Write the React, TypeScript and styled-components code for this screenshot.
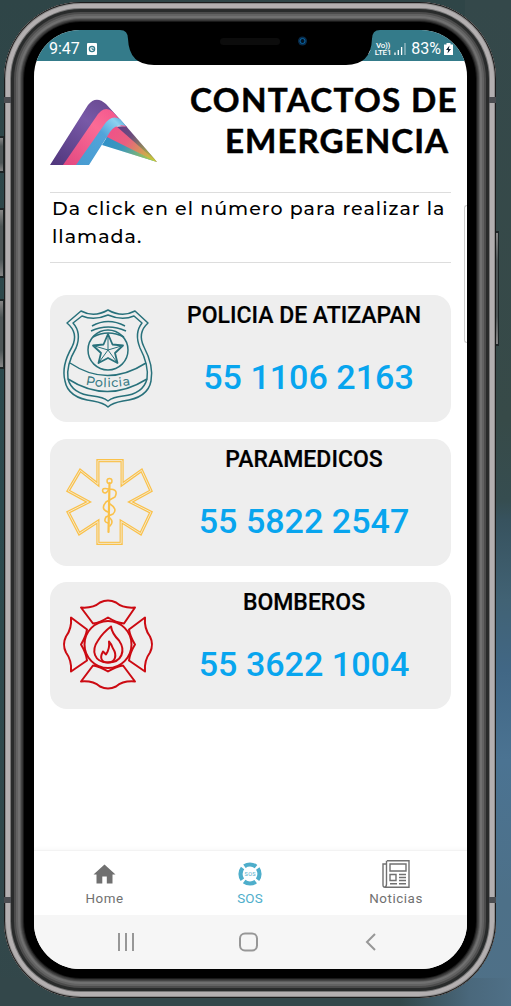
import React from 'react';
import styled, { createGlobalStyle } from 'styled-components';

const Global = createGlobalStyle`
  * { box-sizing: border-box; }
  body { margin: 0; background: #304749; font-family: Roboto, sans-serif; }
`;

const Stage = styled.div`
  position: relative;
  width: 511px;
  height: 1006px;
  padding: 2px 0 0 4px;
  overflow: hidden;
  background:
    linear-gradient(90deg, #33474a 0, #33474a 400px, #4a687c 470px, #4f7087 511px) 0 100% / 511px 28px no-repeat,
    linear-gradient(180deg, #34484a 0, #374a48 420px, #364d50 500px, #37525e 520px, #416274 600px, #416785 670px, #4b7392 760px, #4d7088 900px, #4f7087 1006px) 100% 0 / 46px 100% no-repeat,
    linear-gradient(180deg, #2f4547, #2b4a4e 50%, #33474a);
`;

const SideKey = styled.i<{ $top: number; $height: number; $right?: boolean }>`
  position: absolute;
  top: ${(p) => p.$top}px;
  ${(p) => (p.$right ? 'left: 495px' : 'left: -1px')};
  width: ${(p) => (p.$right ? 4 : 5)}px;
  height: ${(p) => p.$height}px;
  border: solid #1d2526;
  border-width: 2px 1px;
  background: linear-gradient(#858585, #4d5556 25%, #4d5556 75%, #858585);
`;

const Shell = styled.div`
  position: relative;
  width: 492px;
  height: 996px;
  padding: 28px 29px 29px 30px;
  border-radius: 77px;
  background: #000;
  box-shadow:
    inset 0 0 0 1px #1c1c1c,
    inset 0 0 0 2px #8d8b8b,
    inset 0 0 0 6px #b3afb0,
    inset 0 0 0 7px #777,
    inset 0 0 0 10px #292b2b,
    inset 0 0 0 12px #4c4c4c,
    inset 0 0 0 14px #626262,
    inset 0 0 0 16px #707070,
    inset 0 0 0 17px #5d5d5d,
    inset 0 0 0 18px #444,
    inset 0 0 0 19px #353535,
    inset 0 0 0 20px #191919;
`;

const Band = styled.i<{ $top: number; $right?: boolean }>`
  position: absolute;
  top: ${(p) => p.$top}px;
  ${(p) => (p.$right ? 'right: 0' : 'left: 0')};
  width: 7px;
  height: 6px;
  background: #4a4c50;
`;

const Screen = styled.div`
  position: relative;
  display: flex;
  flex-direction: column;
  width: 433px;
  height: 939px;
  border-radius: 46px;
  overflow: hidden;
  background: #fff;
`;

const StatusBar = styled.header`
  flex: none;
  display: flex;
  justify-content: space-between;
  height: 31px;
  padding: 8px 14px 0 15px;
  background: #347b8a;
  color: #fff;
  font-size: 16px;
  line-height: 22px;
`;

const StatusGroup = styled.div`
  display: flex;
  align-items: center;
  height: 22px;
  white-space: nowrap;
`;

const AlarmIcon = styled.svg`
  margin-left: 7px;
`;

const SignalIcon = styled.svg`
  margin: 0 5px 0 3px;
`;

const BatteryIcon = styled.svg`
  margin-left: 3px;
`;

const TickIcon = styled.svg`
  margin: 5px 4px 0 0;
`;

const Volte = styled.span`
  display: flex;
  flex-direction: column;
  align-items: center;
  font-size: 8px;
  font-weight: 500;
  line-height: 7.5px;
  letter-spacing: -0.2px;
`;

const Notch = styled.svg`
  position: absolute;
  left: 84px;
  top: 0;
`;

const Content = styled.main`
  flex: 1;
  padding: 0 16px;
`;

const Hero = styled.div`
  display: flex;
  height: 132px;
  border-bottom: 1px solid #ddd;
`;

const Logo = styled.svg`
  flex: none;
  margin-top: 38px;
`;

const Title = styled.h1`
  flex: none;
  width: 288px;
  margin: 18px 0 0 22px;
  text-align: center;
  font: 700 33.2px/41px Lato, sans-serif;
  letter-spacing: 1.3px;
  -webkit-text-stroke: 0.5px #000;
  color: #000;
  white-space: nowrap;

  span { display: block; }
  span:last-child { padding-left: 26px; letter-spacing: 1px; }
`;

const Hint = styled.p`
  height: 70px;
  margin: 0 0 32px;
  padding: 2px 2px 0;
  border-bottom: 1px solid #ddd;
  font: 500 19px/28px Montserrat, Inter, sans-serif;
  letter-spacing: 1.03px;
  color: #000;
  white-space: nowrap;
`;

const Card = styled.article`
  display: flex;
  width: 401px;
  height: 127px;
  margin-bottom: 16.5px;
  border-radius: 17px;
  background: #eee;
`;

const Emblem = styled.svg`
  flex: none;
  width: 116px;
  height: 127px;
`;

const CardBody = styled.div`
  flex: 1;
  margin-left: -9px;
  text-align: center;
`;

const Name = styled.h2`
  margin: 9px 0 0;
  font: 500 23px/24px Roboto, sans-serif;
  -webkit-text-stroke: 0.2px #000;
  color: #000;
  white-space: nowrap;
`;

const Phone = styled.a<{ $dx: number }>`
  display: block;
  margin-top: 28px;
  padding-left: ${(p) => p.$dx}px;
  font: 500 34.1px/42px Roboto, sans-serif;
  color: #08a5ee;
  white-space: nowrap;
`;

const Tabs = styled.nav`
  flex: none;
  display: flex;
  height: 65px;
  border-top: 1px solid #f3f3f3;
  box-shadow: 0 -2px 3px #fafafa;
`;

const Tab = styled.div<{ $active?: boolean; $width: number }>`
  display: flex;
  flex-direction: column;
  align-items: center;
  width: ${(p) => p.$width}px;
  padding-top: 8px;
  color: ${(p) => (p.$active ? '#4eaecb' : '#707070')};
  font-size: 13.4px;
  line-height: 18px;
  letter-spacing: ${(p) => (p.$active ? 0.2 : 0.55)}px;

  svg { height: 30px; flex: none; margin-bottom: 1px; }
`;

const SystemBar = styled.footer`
  flex: none;
  display: flex;
  align-items: center;
  height: 54px;
  padding-left: 82px;
  gap: 101px;
  background: #f6f6f6;
`;

const EdgeHandle = styled.i`
  position: absolute;
  right: 0;
  top: 175px;
  width: 3px;
  height: 138px;
  border: 1px solid #ccc;
  border-right: 0;
  border-radius: 3px 0 0 3px;
  background: #fff;
`;

const AtizapanLogo = () => (
  <Logo width="108" height="67" viewBox="0 0 108 67">
    <defs>
      <linearGradient id="purple" x1="0" y1="1" x2=".8" y2="0">
        <stop stopColor="#50367c" /><stop offset=".65" stopColor="#7859a7" /><stop offset="1" stopColor="#68488f" />
      </linearGradient>
      <linearGradient id="pink" x1="0" y1="1" x2="1" y2="0">
        <stop stopColor="#e24880" /><stop offset=".6" stopColor="#fa6b95" /><stop offset="1" stopColor="#f2528b" />
      </linearGradient>
      <linearGradient id="blue" x1="0" y1="1" x2="1" y2="0">
        <stop stopColor="#489bd0" /><stop offset=".6" stopColor="#51a4da" /><stop offset=".85" stopColor="#8bd1f0" /><stop offset="1" stopColor="#409bd0" />
      </linearGradient>
      <linearGradient id="tip" gradientUnits="userSpaceOnUse" x1="62" y1="30" x2="107" y2="63">
        <stop stopColor="#b8d132" stopOpacity="0" /><stop offset=".35" stopColor="#b8d132" stopOpacity=".1" /><stop offset="1" stopColor="#c4d32e" />
      </linearGradient>
    </defs>
    <path d="M62 28 L76 27 L107 63Z" fill="#633c86" />
    <path d="M60 30 L65 26 L107 63 L56 39Z" fill="#ef5388" />
    <path d="M57 38 L107 63 L52 46Z" fill="#2f91c9" />
    <path d="M61 28 L76 27 L107 63 L52 46Z" fill="url(#tip)" />
    <path d="M0 66 L38 6 Q46-4 56 5 L77 28 L55 20 L14 66Z" fill="url(#purple)" />
    <path d="M13 66 L46 18 Q54 5 63 13 L76 28 L58 24 L27 66Z" fill="url(#pink)" />
    <path d="M26 66 L54 26 Q61 15 70 20 L76 27 Q66 24 60 33 L39 66Z" fill="url(#blue)" />
  </Logo>
);

const PoliceBadge = () => (
  <Emblem viewBox="0 0 116 127" fill="none" stroke="#28717b" strokeWidth="1.5" strokeLinejoin="round">
    <path d="M31 16 Q44 23 58 15 Q72 23 85 16 L98 28 Q87 38 94 52 Q104 71 101 86 Q98 103 73 106 Q62 108 58 112 Q54 108 43 106 Q18 103 15 86 Q11 71 22 52 Q29 38 17 28Z" />
    <path d="M32 21 Q44 26 58 20 Q72 26 84 21 L92 28 Q84 38 90 53 Q99 70 97 84 Q93 99 73 101 Q63 102 58 106 Q53 102 43 101 Q22 99 18 84 Q16 70 26 53 Q32 38 23 28Z" />
    <path d="M20 68 Q57 93 96 68 M18 84 Q57 109 97 84 M42 31 Q58 22 75 31 M41 36 Q58 28 76 36 M43 42 Q58 34 74 42" />
    <circle cx="58" cy="55" r="20" />
    <path strokeWidth="1.8" d="M58 39 L62.5 49.5 L73 50.5 L65 58 L67.5 68 L58 63 L48.5 68 L51 58 L43 50.5 L53.5 49.5Z" />
    <path strokeWidth="1" d="M58 55V39 M58 55 L73 50.5 M58 55 L67.5 68 M58 55 L48.5 68 M58 55 L43 50.5" />
    <path id="ribbon" d="M35.500 89.500 Q58 95 88 88.500" stroke="none" />
    <text fill="#28717b" stroke="#28717b" strokeWidth=".2" fontFamily="Montserrat, Lato, sans-serif" fontSize="12.3" letterSpacing=".8">
      <textPath href="#ribbon">Policia</textPath>
    </text>
  </Emblem>
);

const MedicStar = () => {
  const star = 'M47 18.500H73V44L94 29L104 51L82 63L104 74L93 97L72 84V107.500H47V84L27 97L15 74L37 63L15 51L28 29L47 44Z';
  return (
    <Emblem viewBox="0 0 116 127" fill="none">
      <g transform="translate(4.200 4.400) scale(.93)">
        <path d={star} stroke="#fac14a" strokeWidth="3.4" />
        <path d={star} stroke="#f3ead2" strokeWidth="1" />
      </g>
      <g stroke="#fac14a" strokeLinecap="round">
        <circle cx="59.500" cy="42" r="2.500" strokeWidth="1.400" />
        <path d="M59.500 44 L58.500 93" strokeWidth="2.200" />
        <path d="M59 50 Q51 48 53 53 Q56 56 59 50 Q69 50 65 58 L56 63 Q50 70 58 73 M60 65 Q68 70 63 75 L56 78 Q53 83 58 84 M60 79 Q64 83 60 87" strokeWidth="1.600" />
      </g>
    </Emblem>
  );
};

const FireCross = () => (
  <Emblem viewBox="0 -2.500 116 127" fill="none" stroke="#cc0a12" strokeWidth="2" strokeLinejoin="round">
    <path d="M31 23 Q43 24 50 18 Q58 14 66 18 Q73 24 85 23 L74 39 Q66 38 58 33 Q50 38 43 39Z" />
    <path d="M31 97 Q43 96 50 102 Q58 106 66 102 Q73 96 85 97 L73 81 Q66 82 58 87 Q50 82 43 81Z" />
    <path d="M21 33 Q22 44 16 52 Q12 60 16 68 Q22 76 21 87 L37 76 Q36 68 31 60 Q36 52 37 45Z" />
    <path d="M95 33 Q94 44 100 52 Q104 60 100 68 Q94 76 95 87 L79 76 Q80 68 85 60 Q80 52 79 45Z" />
    <circle cx="58" cy="60" r="23.500" />
    <path d="M61 42 Q53 48 48 56 C41 66 44 78 58 78 C72 78 76 66 69 56 Q62 49 61 42Z" />
    <path d="M59 57 Q60 64 56 70 L53 67 C49 74 52 78 58 78 C66 78 67 70 63 64 Q61 59 59 57Z" />
  </Emblem>
);

const contacts = [
  { name: 'POLICIA DE ATIZAPAN', phone: '55 1106 2163', Icon: PoliceBadge, dx: 9 },
  { name: 'PARAMEDICOS', phone: '55 5822 2547', Icon: MedicStar, dx: 0 },
  { name: 'BOMBEROS', phone: '55 3622 1004', Icon: FireCross, dx: 0 },
];

export default function App() {
  return (
    <Stage>
      <Global />
      <SideKey $top={136} $height={37} />
      <SideKey $top={208} $height={70} />
      <SideKey $top={299} $height={70} />
      <SideKey $top={231} $height={115} $right />
      <Shell>
        <Band $top={95} />
        <Band $top={95} $right />
        <Band $top={895} />
        <Band $top={895} $right />
        <Screen>
          <StatusBar>
            <StatusGroup>
              9:47
              <AlarmIcon width="10" height="12" viewBox="0 0 10 12">
                <rect width="10" height="12" rx="1" fill="#fff" />
                <circle cx="5" cy="6" r="2.600" fill="none" stroke="#347b8a" strokeWidth="1.400" />
                <path d="M5 4.500V6.300H7" fill="none" stroke="#347b8a" />
              </AlarmIcon>
            </StatusGroup>
            <StatusGroup>
              <TickIcon width="4" height="6" viewBox="0 0 4 6"><path d="M3 1L1 5" stroke="#fff" /></TickIcon>
              <Volte><span>Vo))</span><span>LTE1</span></Volte>
              <SignalIcon width="12" height="12" viewBox="0 0 12 12" stroke="#fff" strokeWidth="1.300">
                <path d="M1 9.500V12M4.300 7V12M7.600 4V12" /><path d="M11 0V12" opacity=".5" />
              </SignalIcon>
              83%
              <BatteryIcon width="9" height="12" viewBox="0 0 9 12">
                <path d="M0 1.500H2.500V0H6.500V1.500H9V12H0Z" fill="#fff" />
                <path d="M5.500 2.500L2 7H4.200L3.500 10.500L7 6H4.800Z" fill="#123" />
              </BatteryIcon>
            </StatusGroup>
          </StatusBar>
          <Notch width="264" height="35" viewBox="0 0 264 35">
            <path d="M2 0 Q10 0 10 9 Q11 35 36 35H228Q253 35 254 9Q254 0 262 0Z" fill="#000" />
            <rect x="102" y="8" width="60" height="7" rx="3.500" fill="#0c0c0c" />
            <circle cx="184.500" cy="11" r="4.500" fill="#082b4a" />
            <circle cx="184.500" cy="11" r="2.500" fill="#031323" stroke="#0968a8" />
          </Notch>
          <Content>
            <Hero>
              <AtizapanLogo />
              <Title><span>CONTACTOS DE</span><span>EMERGENCIA</span></Title>
            </Hero>
            <Hint>
              Da click en el número para realizar la<br />llamada.
            </Hint>
            {contacts.map(({ name, phone, Icon, dx }) => (
              <Card key={name}>
                <Icon />
                <CardBody>
                  <Name>{name}</Name>
                  <Phone $dx={dx}>{phone}</Phone>
                </CardBody>
              </Card>
            ))}
          </Content>
          <Tabs>
            <Tab $width={141}>
              <svg width="24" viewBox="0 0 24 30"><path d="M11.500 5.500L.5 15.500H3.500V24.500H9.300V17.500H13.800V24.500H19.500V15.500H22.500Z" fill="#707070" /></svg>
              Home
            </Tab>
            <Tab $width={150} $active>
              <svg width="24" viewBox="0 0 24 30">
                <circle cx="12" cy="15" r="9.500" fill="none" stroke="#4eaecb" strokeWidth="4.200" strokeDasharray="12.400 2.522" strokeDashoffset="6.200" />
                <text x="12.200" y="17" textAnchor="middle" fontSize="5.500" letterSpacing=".3" fill="#4eaecb">SOS</text>
              </svg>
              SOS
            </Tab>
            <Tab $width={142}>
              <svg width="28" viewBox="0 0 28 30" fill="none" stroke="#707070" strokeWidth="1.400">
                <path d="M5 1.700H27V28.300H3Q1 28.300 1 26V5H4.500M4.500 1.700V25Q4.500 28 2.500 28" />
                <path d="M8 5H24V12H8ZM8 15.500H14V21.500H8ZM17 15.500H24M17 18.500H24M17 21.500H24M8 24.700H15M17 24.700H24" />
              </svg>
              Noticias
            </Tab>
          </Tabs>
          <SystemBar>
            <svg width="20" height="18" stroke="#979797" strokeWidth="2"><path d="M3 0V18M10 0V18M17 0V18" /></svg>
            <svg width="22" height="20" fill="none" stroke="#979797" strokeWidth="2"><rect x="3" y="1.500" width="17" height="17" rx="5" /></svg>
            <svg width="18" height="18" fill="none" stroke="#979797" strokeWidth="2"><path d="M15 1L7 9L15 17" /></svg>
          </SystemBar>
          <EdgeHandle />
        </Screen>
      </Shell>
    </Stage>
  );
}
